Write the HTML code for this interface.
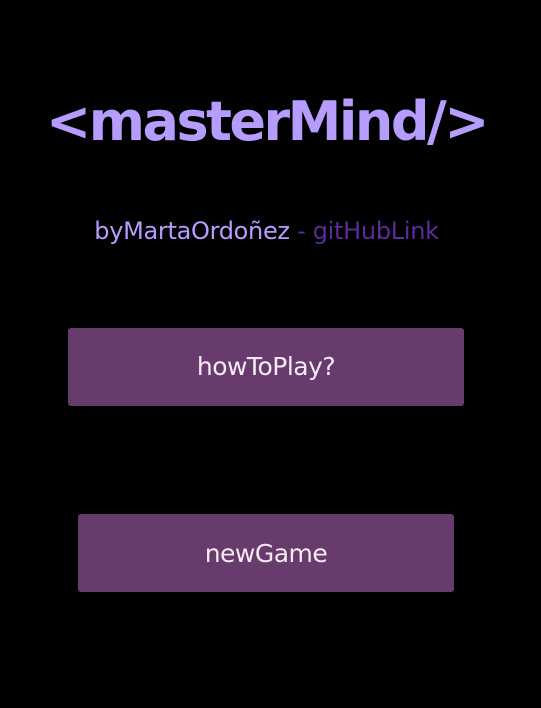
<!DOCTYPE html>
<html><head><meta charset="utf-8"><style>
html,body{margin:0;padding:0;background:#000;width:541px;height:708px;overflow:hidden;font-family:"DejaVu Sans","Liberation Sans",sans-serif}
.t{position:absolute;left:0;width:533px;top:87px;text-align:center;color:#b69cff;font-weight:bold;font-size:54px;line-height:70px;letter-spacing:-2.5px}
.s{position:absolute;left:0;width:533px;top:213px;text-align:center;font-size:24px;line-height:36px;color:#b69cff;letter-spacing:-0.3px}
.s span{color:#5e2a9c}
.b{position:absolute;background:#673b6b;border-radius:3px;color:#f8eaf6;font-size:25px;text-align:center;letter-spacing:-0.5px}
</style></head><body>
<div class="t">&lt;masterMind/&gt;</div>
<div class="s">byMartaOrdoñez <span>- gitHubLink</span></div>
<div class="b" style="left:68px;top:328px;width:396px;height:78px;line-height:78px">howToPlay?</div>
<div class="b" style="left:78px;top:514px;width:376px;height:78px;line-height:80px">newGame</div>
</body></html>
